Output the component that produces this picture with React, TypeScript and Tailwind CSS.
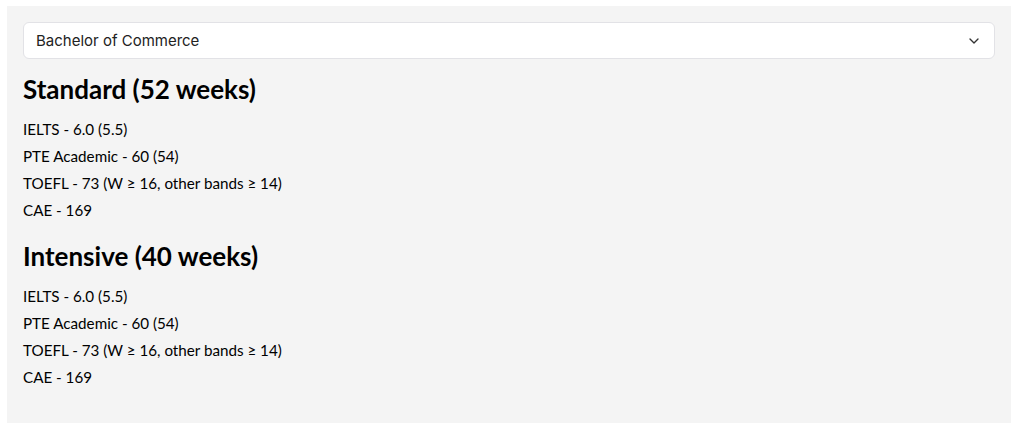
import { ChevronDown } from "lucide-react";

const sections = [
    {
        title: "Standard (52 weeks)",
        items: ["IELTS - 6.0 (5.5)", "PTE Academic - 60 (54)", "TOEFL - 73 (W ≥ 16, other bands ≥ 14)", "CAE - 169"],
    },
    {
        title: "Intensive (40 weeks)",
        items: ["IELTS - 6.0 (5.5)", "PTE Academic - 60 (54)", "TOEFL - 73 (W ≥ 16, other bands ≥ 14)", "CAE - 169"],
    },
];

export default function App() {
    return (
        <div className="bg-white w-[1018px] h-[430px] pt-[6px] pl-[7px]">
            <div className="bg-[#f4f4f4] w-[1004px] h-[417px] p-4 font-['Lato',sans-serif] text-black">
                <div className="flex items-center justify-between h-[37px] bg-white border border-[#e2e2e6] rounded-md pl-3 pr-3">
                    <span className="font-['Inter',sans-serif] text-[15px] leading-[20px] pt-[1px] text-[#222]">Bachelor of Commerce</span>
                    <ChevronDown className="w-4 h-4 text-[#333]" strokeWidth={2} />
                </div>
                {sections.map((s, i) => (
                    <div key={s.title} className={i === 0 ? "mt-[14px]" : "mt-[16px]"}>
                        <h2 className="text-[26px] font-bold leading-[32px] mb-[11px]">{s.title}</h2>
                        <ul>
                            {s.items.map((it, idx) => (
                                <li key={idx} className="text-[15.2px] leading-[27px]">{it}</li>
                            ))}
                        </ul>
                    </div>
                ))}
            </div>
        </div>
    );
}
